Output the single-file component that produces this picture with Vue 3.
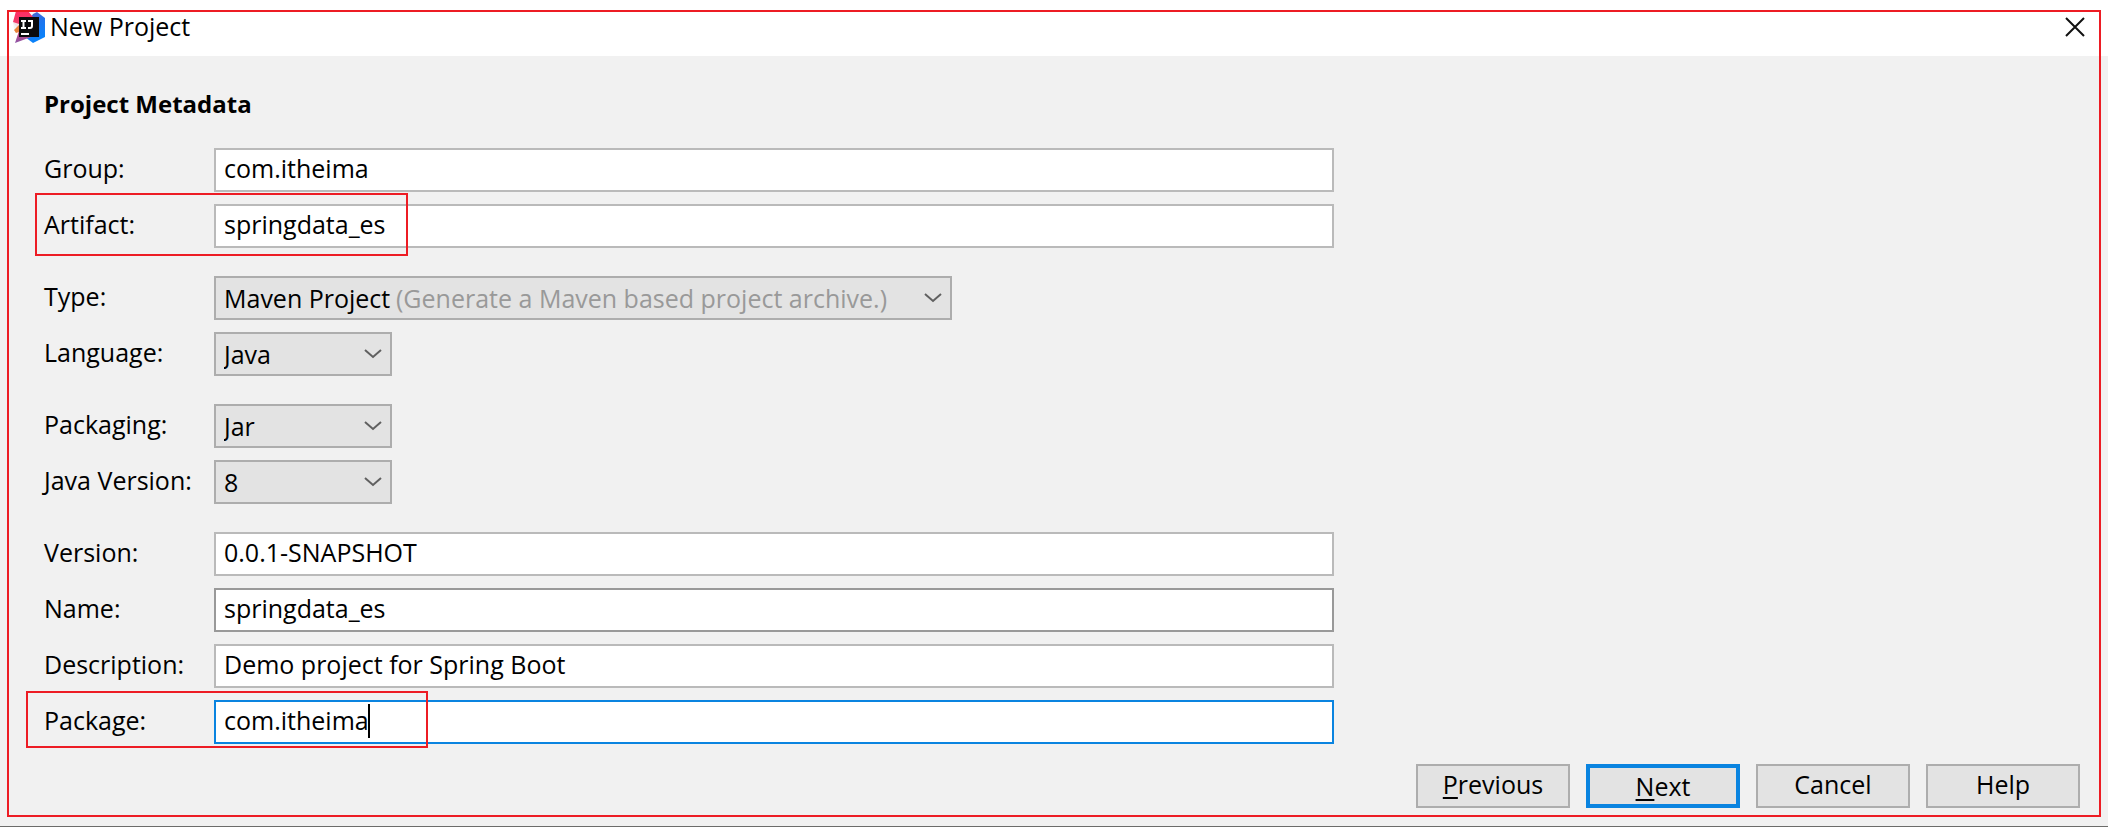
<script setup>
import { ref } from 'vue'

const artifact = ref('springdata_es')
const groups = ref([
  [
    { id: 'group', label: 'Group:', kind: 'text', value: 'com.itheima' },
    { id: 'artifact', label: 'Artifact:', kind: 'text', value: artifact.value, mark: 'mark-artifact' },
  ],
  [
    {
      id: 'type', label: 'Type:', kind: 'select', value: 'Maven Project', wide: true,
      options: ['Maven Project', 'Gradle Project'], hint: '(Generate a Maven based project archive.)',
    },
    { id: 'language', label: 'Language:', kind: 'select', value: 'Java', options: ['Java', 'Kotlin', 'Groovy'] },
  ],
  [
    { id: 'packaging', label: 'Packaging:', kind: 'select', value: 'Jar', options: ['Jar', 'War'] },
    { id: 'java-version', label: 'Java Version:', kind: 'select', value: '8', options: ['8', '11', '14'] },
  ],
  [
    { id: 'version', label: 'Version:', kind: 'text', value: '0.0.1-SNAPSHOT' },
    { id: 'name', label: 'Name:', kind: 'text', value: artifact.value, tone: 'dark' },
    { id: 'description', label: 'Description:', kind: 'text', value: 'Demo project for Spring Boot' },
    { id: 'package', label: 'Package:', kind: 'text', value: 'com.itheima', tone: 'active', mark: 'mark-package' },
  ],
])
</script>

<template>
  <div class="window">
    <header class="titlebar">
      <svg class="logo" viewBox="0 0 32 32" aria-hidden="true">
        <defs>
          <linearGradient id="lgPink" x1="0" y1="0" x2="0" y2="1">
            <stop offset="0" stop-color="#fe2d63" />
            <stop offset="0.45" stop-color="#f0406c" />
            <stop offset="1" stop-color="#8a55a8" />
          </linearGradient>
          <linearGradient id="lgBlue" x1="0" y1="0" x2="0.3" y2="1">
            <stop offset="0" stop-color="#5a62c8" />
            <stop offset="0.5" stop-color="#1d74ee" />
            <stop offset="1" stop-color="#0a82fa" />
          </linearGradient>
        </defs>
        <path d="M18 6 20 3 24 1l8 6v19l-12 6-8-6z" fill="url(#lgBlue)" />
        <path d="M3 0h12l5 6-2 20-16 6 4-12-6-9z" fill="url(#lgPink)" />
        <path d="M0 11 6 13v3l-5 2z" fill="#f1f1f1" fill-opacity="0.9" />
        <path d="m1 19 5-5v7l-3 1z" fill="#e8843c" />
        <rect x="6" y="6" width="20" height="20" fill="#0b0b0d" />
        <path d="M8 10h5M10.500 10v7M8 17h5M15 10h4v5q0 2-2 2h-2" fill="none" stroke="#fff" stroke-width="2" />
        <path d="M8 23h8" stroke="#fff" stroke-width="2" />
      </svg>
      <h1>New Project</h1>
      <button class="close" type="button" aria-label="Close">
        <svg viewBox="0 0 20 20" aria-hidden="true"><path d="m1 1 18 18M19 1 1 19" /></svg>
      </button>
    </header>

    <main class="content">
      <h2>Project Metadata</h2>
      <form class="form" @submit.prevent>
        <div v-for="(rows, i) in groups" :key="i" class="group">
          <div v-for="row in rows" :key="row.id" class="row">
            <label :for="row.id">{{ row.label }}</label>
            <div v-if="row.kind === 'text'" class="field">
              <input :id="row.id" v-model="row.value" type="text" :class="row.tone" spellcheck="false" />
              <span v-if="row.tone === 'active'" class="caret"></span>
            </div>
            <div v-else class="field combo" :class="{ wide: row.wide }">
              <select :id="row.id" v-model="row.value">
                <option v-for="o in row.options" :key="o">{{ o }}</option>
              </select>
              <span v-if="row.hint" class="hint">{{ row.hint }}</span>
              <svg class="chevron" viewBox="0 0 18 10" aria-hidden="true"><path d="m1 1 8 7 8-7" /></svg>
            </div>
            <span v-if="row.mark" class="mark" :class="row.mark"></span>
          </div>
        </div>
      </form>
    </main>

    <footer class="actions">
      <button type="button"><u>P</u>revious</button>
      <button type="button" class="primary"><u>N</u>ext</button>
      <button type="button">Cancel</button>
      <button type="button">Help</button>
    </footer>
    <div class="outline"></div>
  </div>
</template>

<style>
body {
  background: #f1f1f1;
}
</style>

<style scoped>
.window {
  position: relative;
  box-sizing: border-box;
  min-height: 100vh;
  border-bottom: 1px solid #6c6c6a;
  background: #f1f1f1;
  color: #000;
  font: 25px/36px "Open Sans", "Noto Sans", sans-serif;
}
.titlebar {
  display: flex;
  align-items: center;
  height: 56px;
  box-sizing: border-box;
  padding: 0 23px 2px 13px;
  background: #fff;
}
.logo {
  width: 32px;
  height: 32px;
}
h1 {
  flex: 1;
  margin: 0 0 0 5px;
  padding-bottom: 2px;
  font-size: 25px;
  font-weight: 400;
}
.close {
  display: flex;
  padding: 0;
  border: 0;
  background: none;
}
.close svg {
  width: 20px;
  height: 20px;
}
.close path {
  fill: none;
  stroke: #111;
  stroke-width: 2;
}
.content {
  padding: 30px 44px 0;
}
h2 {
  margin: 0 0 26px;
  font-size: 24px;
  font-weight: 700;
}
.form {
  display: flex;
  flex-direction: column;
  gap: 28px;
}
.group {
  display: flex;
  flex-direction: column;
  gap: 12px;
}
.row {
  position: relative;
  display: grid;
  grid-template-columns: 170px minmax(0, 1120px);
  align-items: center;
}
label {
  padding-bottom: 4px;
}
.field {
  position: relative;
  display: flex;
}
input,
select {
  width: 100%;
  height: 44px;
  box-sizing: border-box;
  margin: 0;
  padding: 0 8px 4px;
  border: 2px solid #bababa;
  border-radius: 0;
  outline: 0;
  background: #fff;
  color: #000;
  font: inherit;
}
input.dark {
  border-color: #999;
}
input.active {
  border-color: #0a84e0;
}
select {
  appearance: none;
  padding-bottom: 0;
  border-color: #adadad;
  background: #e3e3e3;
}
.combo {
  width: 178px;
}
.combo.wide {
  width: 738px;
  max-width: 100%;
}
.hint {
  position: absolute;
  top: 4px;
  left: 182px;
  color: #999;
  white-space: nowrap;
  pointer-events: none;
}
.chevron {
  position: absolute;
  top: 17px;
  right: 10px;
  width: 18px;
  height: 10px;
  pointer-events: none;
}
.chevron path {
  fill: none;
  stroke: #606060;
  stroke-width: 2;
}
.caret {
  position: absolute;
  top: 4px;
  left: 154px;
  width: 2px;
  height: 34px;
  background: #000;
}
.mark,
.outline {
  position: absolute;
  box-sizing: border-box;
  border: 2px solid #ed1c24;
  pointer-events: none;
}
.mark-artifact {
  top: -11px;
  left: -9px;
  width: 373px;
  height: 63px;
}
.mark-package {
  top: -9px;
  left: -18px;
  width: 402px;
  height: 57px;
}
.outline {
  inset: 10px 7px 9px;
}
.actions {
  display: flex;
  justify-content: flex-end;
  gap: 16px;
  padding: 20px 28px 18px;
}
.actions button {
  width: 154px;
  height: 44px;
  padding: 0 0 4px;
  border: 2px solid #adadad;
  background: #e3e3e3;
  color: #000;
  font: inherit;
}
.actions button.primary {
  border: 4px solid #0a84e0;
}
u {
  text-decoration-thickness: 2px;
  text-underline-offset: 3px;
}
</style>
